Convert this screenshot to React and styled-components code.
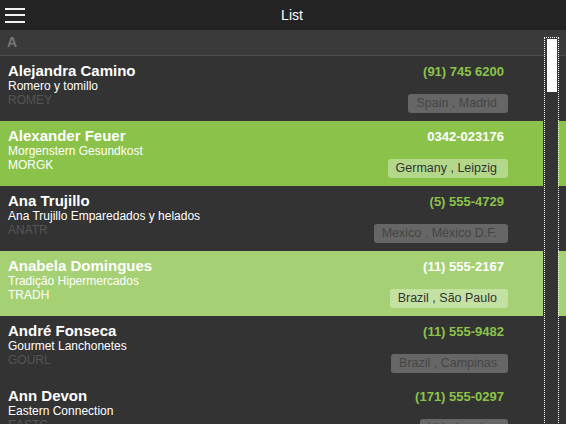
import styled, { createGlobalStyle } from 'styled-components'

const GlobalStyle = createGlobalStyle`
    html, body {
        margin: 0;
        padding: 0;
        height: 100%;
        overflow: hidden;
        background: #333;
        font-family: "Liberation Sans", Arial, sans-serif;
    }
`

const Screen = styled.div`
    position: relative;
    width: 566px;
    height: 424px;
    overflow: hidden;
    background: #333;
`

const TopBar = styled.div`
    height: 30px;
    background: #232323;
    display: flex;
    align-items: center;
    position: relative;
`

const MenuButton = styled.div`
    width: 20px;
    height: 15px;
    margin-left: 5px;
    display: flex;
    flex-direction: column;
    justify-content: space-between;
    span {
        display: block;
        height: 2px;
        background: #f2f2f2;
    }
`

const Title = styled.div`
    position: absolute;
    left: 18px;
    right: 0;
    text-align: center;
    color: #fff;
    font-size: 14px;
`

const GroupHeader = styled.div`
    height: 25px;
    background: #3a3a3a;
    border-bottom: 1px solid #4c4c4c;
    color: #777;
    font-weight: bold;
    font-size: 14px;
    line-height: 24px;
    padding-left: 7px;
`

const Row = styled.div`
    height: 65px;
    box-sizing: border-box;
    display: flex;
    justify-content: space-between;
    padding: 7px 58px 0 8px;
    background: ${(props) => props.bg || '#333'};
`

const Left = styled.div`
    display: flex;
    flex-direction: column;
    color: #fff;
`

const Name = styled.div`
    font-size: 15px;
    font-weight: bold;
    line-height: 16px;
`

const Company = styled.div`
    font-size: 12px;
    line-height: 14px;
`

const Code = styled.div`
    font-size: 12px;
    line-height: 14px;
    color: ${(props) => (props.active ? '#fff' : '#555')};
`

const Right = styled.div`
    display: flex;
    flex-direction: column;
    align-items: flex-end;
`

const Phone = styled.div`
    font-size: 13px;
    font-weight: bold;
    line-height: 16px;
    margin-top: 1px;
    padding-right: 4px;
    color: ${(props) => (props.active ? '#fff' : '#8bc34a')};
`

const Badge = styled.div`
    margin-top: 14px;
    height: 19px;
    line-height: 19px;
    padding: 0 11px 0 8px;
    border-radius: 3px;
    font-size: 12.5px;
    color: ${(props) => (props.active ? '#333' : '#454545')};
    background: ${(props) => props.bg || '#666'};
`

const ScrollStrip = styled.div`
    position: absolute;
    left: 543px;
    top: 56px;
    width: 15px;
    bottom: 0;
    background: #333;
`

const ScrollTrack = styled.div`
    position: absolute;
    left: 544px;
    top: 37px;
    width: 13px;
    height: 400px;
    border: 1px dotted #fff;
`

const ScrollThumb = styled.div`
    margin: 1px 0 0 2px;
    width: 10px;
    height: 53px;
    background: #fff;
`

const people = [
    { name: 'Alejandra Camino', company: 'Romero y tomillo', code: 'ROMEY', phone: '(91) 745 6200', place: 'Spain , Madrid' },
    { name: 'Alexander Feuer', company: 'Morgenstern Gesundkost', code: 'MORGK', phone: '0342-023176', place: 'Germany , Leipzig', bg: '#8bc34a', badge: '#b3d88a' },
    { name: 'Ana Trujillo', company: 'Ana Trujillo Emparedados y helados', code: 'ANATR', phone: '(5) 555-4729', place: 'Mexico , México D.F.' },
    { name: 'Anabela Domingues', company: 'Tradição Hipermercados', code: 'TRADH', phone: '(11) 555-2167', place: 'Brazil , São Paulo', bg: '#a5d073', badge: '#c4e1a4' },
    { name: 'André Fonseca', company: 'Gourmet Lanchonetes', code: 'GOURL', phone: '(11) 555-9482', place: 'Brazil , Campinas' },
    { name: 'Ann Devon', company: 'Eastern Connection', code: 'EASTC', phone: '(171) 555-0297', place: 'UK , London' },
]

export default function App() {
    return (
        <Screen>
            <GlobalStyle />
            <TopBar>
                <MenuButton>
                    <span />
                    <span />
                    <span />
                </MenuButton>
                <Title>List</Title>
            </TopBar>
            <GroupHeader>A</GroupHeader>
            {people.map((p) => (
                <Row key={p.code} bg={p.bg}>
                    <Left>
                        <Name>{p.name}</Name>
                        <Company>{p.company}</Company>
                        <Code active={!!p.bg}>{p.code}</Code>
                    </Left>
                    <Right>
                        <Phone active={!!p.bg}>{p.phone}</Phone>
                        <Badge active={!!p.bg} bg={p.badge}>{p.place}</Badge>
                    </Right>
                </Row>
            ))}
            <ScrollStrip />
            <ScrollTrack>
                <ScrollThumb />
            </ScrollTrack>
        </Screen>
    )
}
